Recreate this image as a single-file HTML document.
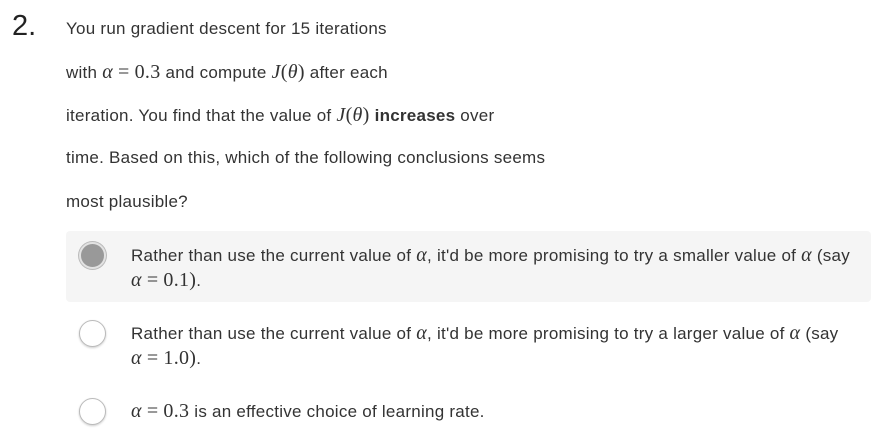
<!DOCTYPE html>
<html><head><style>
body{margin:0;width:883px;height:433px;background:#fff;position:relative;font-family:"Liberation Sans",sans-serif;color:#333;font-size:17px;letter-spacing:0.25px;overflow:hidden}
.l{position:absolute;white-space:nowrap;line-height:20px}
.m{font-family:"Liberation Serif",serif;font-size:20px;letter-spacing:0.3px}
.i{font-style:italic}
.e{margin:0 5px}
.num{position:absolute;left:12px;top:10px;font-size:29px;color:#222;letter-spacing:0}
.box{position:absolute;left:66px;top:231px;width:805px;height:71px;background:#f5f5f5;border-radius:4px}
.r{position:absolute;left:79px;width:25px;height:25px;border-radius:50%;border:1px solid #bbb;background:#fff;box-shadow:0 1px 2px rgba(0,0,0,.2)}
.r.s{background:#999;border:2px solid #e2e2e2;width:23px;height:23px;box-shadow:0 0 0 1px #bbb}
</style></head><body>
<div class="num">2.</div>
<div class="l" style="left:66px;top:19px">You run gradient descent for 15 iterations</div>
<div class="l" style="left:66px;top:62px">with <span class="m"><span class="i">α</span><span class="e">=</span>0.3</span> and compute <span class="m"><span class="i">J</span>(<span class="i">θ</span>)</span> after each</div>
<div class="l" style="left:66px;top:105px">iteration. You find that the value of <span class="m"><span class="i">J</span>(<span class="i">θ</span>)</span> <b>increases</b> over</div>
<div class="l" style="left:66px;top:148px">time. Based on this, which of the following conclusions seems</div>
<div class="l" style="left:66px;top:192px">most plausible?</div>
<div class="box"></div>
<div class="r s" style="top:242px"></div>
<div class="l" style="left:131px;top:245px">Rather than use the current value of <span class="m i">α</span>, it'd be more promising to try a smaller value of <span class="m i">α</span> (say</div>
<div class="l" style="left:131px;top:270px"><span class="m"><span class="i">α</span><span class="e">=</span>0.1)</span>.</div>
<div class="r" style="top:320px"></div>
<div class="l" style="left:131px;top:323px">Rather than use the current value of <span class="m i">α</span>, it'd be more promising to try a larger value of <span class="m i">α</span> (say</div>
<div class="l" style="left:131px;top:348px"><span class="m"><span class="i">α</span><span class="e">=</span>1.0)</span>.</div>
<div class="r" style="top:398px"></div>
<div class="l" style="left:131px;top:401px"><span class="m"><span class="i">α</span><span class="e">=</span>0.3</span> is an effective choice of learning rate.</div>
</body></html>
